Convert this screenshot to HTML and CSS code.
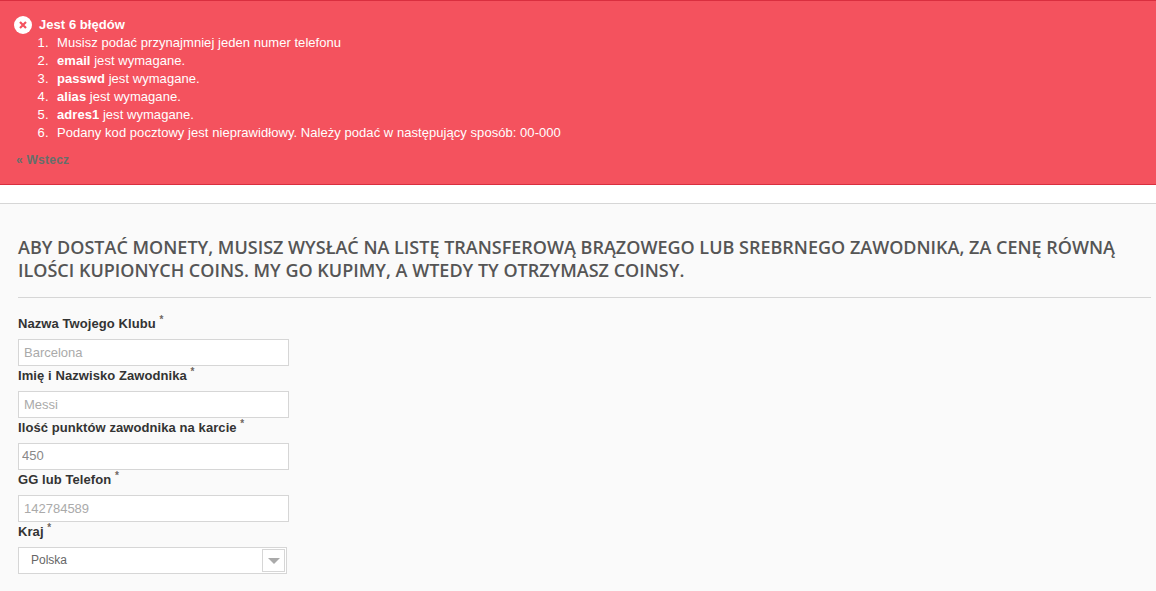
FILE: index.html
```html
<!DOCTYPE html>
<html lang="pl">
<head>
  <meta charset="UTF-8"/>
  <meta name="viewport" content="width=device-width, initial-scale=1.0"/>
  <title>Coins</title>
  <link rel="stylesheet" href="styles.css">
</head>
<body>

  <!-- Error box -->
  <div class="error-box">
    <div class="error-title">
      <svg class="error-icon" width="18" height="18" viewBox="0 0 18 18">
        <circle cx="9" cy="9" r="9" fill="#fff"/>
        <path d="M6 6l6 6M12 6l-6 6" stroke="#f4525e" stroke-width="2.2" fill="none"/>
      </svg>
      <span>Jest 6 błędów</span>
    </div>
    <ol class="error-list">
      <li>Musisz podać przynajmniej jeden numer telefonu</li>
      <li><b>email</b> jest wymagane.</li>
      <li><b>passwd</b> jest wymagane.</li>
      <li><b>alias</b> jest wymagane.</li>
      <li><b>adres1</b> jest wymagane.</li>
      <li>Podany kod pocztowy jest nieprawidłowy. Należy podać w następujący sposób: 00-000</li>
    </ol>
    <a class="back-link" href="#">« Wstecz</a>
  </div>

  <div class="content">
    <h1 class="page-title">Aby dostać monety, musisz wysłać na listę transferową brązowego lub srebrnego zawodnika, za cenę równą ilości kupionych coins. My go kupimy, a wtedy ty otrzymasz coinsy.</h1>

    <form class="coins-form">
      <label class="field-label">Nazwa Twojego Klubu <sup>*</sup></label>
      <input class="field-input" type="text" placeholder="Barcelona">

      <label class="field-label">Imię i Nazwisko Zawodnika <sup>*</sup></label>
      <input class="field-input" type="text" placeholder="Messi">

      <label class="field-label">Ilość punktów zawodnika na karcie <sup>*</sup></label>
      <input class="field-input filled" type="text" value="450">

      <label class="field-label">GG lub Telefon <sup>*</sup></label>
      <input class="field-input" type="text" placeholder="142784589">

      <label class="field-label">Kraj <sup>*</sup></label>
      <div class="select-box">
        <span>Polska</span>
        <div class="select-arrow"><div class="arrow-down"></div></div>
      </div>
    </form>
  </div>

</body>
</html>
```

FILE: styles.css
```css
html, body { height: 100%; }
body { font-family: "Liberation Sans", Arial, sans-serif; background: #fff; margin: 0; overflow: hidden; }

.error-box {
  box-sizing: border-box;
  height: 185px;
  background: #f4525e;
  border-top: 1px solid #d92f3f;
  border-bottom: 1px solid #d92f3f;
  padding: 15px 16px 0;
  color: #fff;
  font-size: 13px;
  line-height: 18px;
  letter-spacing: 0.05px;
}
.error-title {
  display: flex;
  align-items: center;
  font-weight: bold;
  margin-left: -2px;
}
.error-icon { margin-right: 7px; }
.error-list { margin: 0; padding-left: 41px; }
.error-list li::marker { content: counter(list-item) ".\00a0\00a0\200a"; }
.back-link {
  display: block;
  margin-top: 9px;
  color: #666f6b;
  font-size: 12px;
  font-weight: bold;
  letter-spacing: 0.25px;
  text-decoration: none;
}

.content {
  box-sizing: border-box;
  height: 388px;
  margin-top: 18px;
  border-top: 1px solid #d6d6d6;
  background: #fafafa;
  padding: 32px 5px 0 18px;
}
.page-title {
  margin: 0;
  padding-bottom: 15px;
  border-bottom: 1px solid #d6d6d6;
  font-family: "Open Sans", sans-serif;
  font-size: 18px;
  font-weight: 600;
  line-height: 23px;
  color: #555;
  text-transform: uppercase;
}

.coins-form { padding-top: 16px; }
.field-label {
  display: block;
  height: 24px;
  padding-top: 1px;
  font-size: 13px;
  line-height: 18px;
  font-weight: bold;
  letter-spacing: 0.08px;
  color: #333;
}
.field-label sup { font-size: 10px; line-height: 0; color: #6f6660; }
.field-input {
  display: block;
  box-sizing: border-box;
  width: 271px;
  height: 27px;
  margin: 0;
  padding: 0 5px;
  border: 1px solid #d6d6d6;
  border-radius: 0;
  outline: none;
  background: #fff;
  font-family: "Liberation Sans", Arial, sans-serif;
  font-size: 13px;
  color: #888;
}
.field-input.filled { padding: 0 3px 2px; }
.field-input::placeholder { color: #aaa; opacity: 1; }

.select-box {
  box-sizing: border-box;
  display: flex;
  align-items: center;
  justify-content: space-between;
  width: 269px;
  height: 27px;
  padding: 1px 1px 1px 12px;
  border: 1px solid #d6d6d6;
  background: #fff;
  font-size: 12px;
  color: #666;
}
.select-box span { margin-bottom: 2px; }
.select-arrow {
  box-sizing: border-box;
  display: flex;
  align-items: center;
  justify-content: center;
  width: 23px;
  height: 23px;
  border: 1px solid #d6d6d6;
}
.arrow-down {
  width: 0;
  height: 0;
  border-left: 6px solid transparent;
  border-right: 6px solid transparent;
  border-top: 6px solid #aaa;
}
```
